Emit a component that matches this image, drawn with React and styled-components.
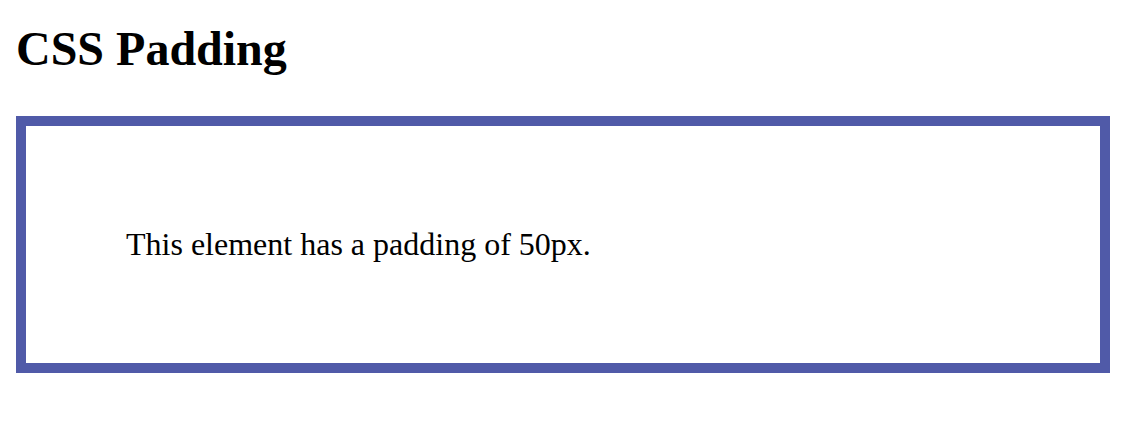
import React from "react";
import styled, { createGlobalStyle } from "styled-components";

const GlobalStyle = createGlobalStyle`
    html, body {
        margin: 0;
        padding: 0;
        background: #fff;
    }
    body {
        font-family: "Liberation Serif", "Times New Roman", serif;
        color: #000;
    }
`;

const Page = styled.div`
    padding: 0 16px 16px 16px;
    display: flow-root;
`;

const Title = styled.h2`
    font-family: "Liberation Serif", "Times New Roman", serif;
    font-size: 48px;
    font-weight: bold;
    margin: 21px 0 40px 0;
`;

const PaddedBox = styled.div`
    border: 10px solid #505aa8;
    padding: ${(p) => p.pad}px;
    font-size: 32px;
    line-height: 1.15;
`;

function App() {
    return (
        <>
            <GlobalStyle />
            <Page>
                <Title>CSS Padding</Title>
                <PaddedBox pad={100}>
                    This element has a padding of 50px.
                </PaddedBox>
            </Page>
        </>
    );
}

export default App;
